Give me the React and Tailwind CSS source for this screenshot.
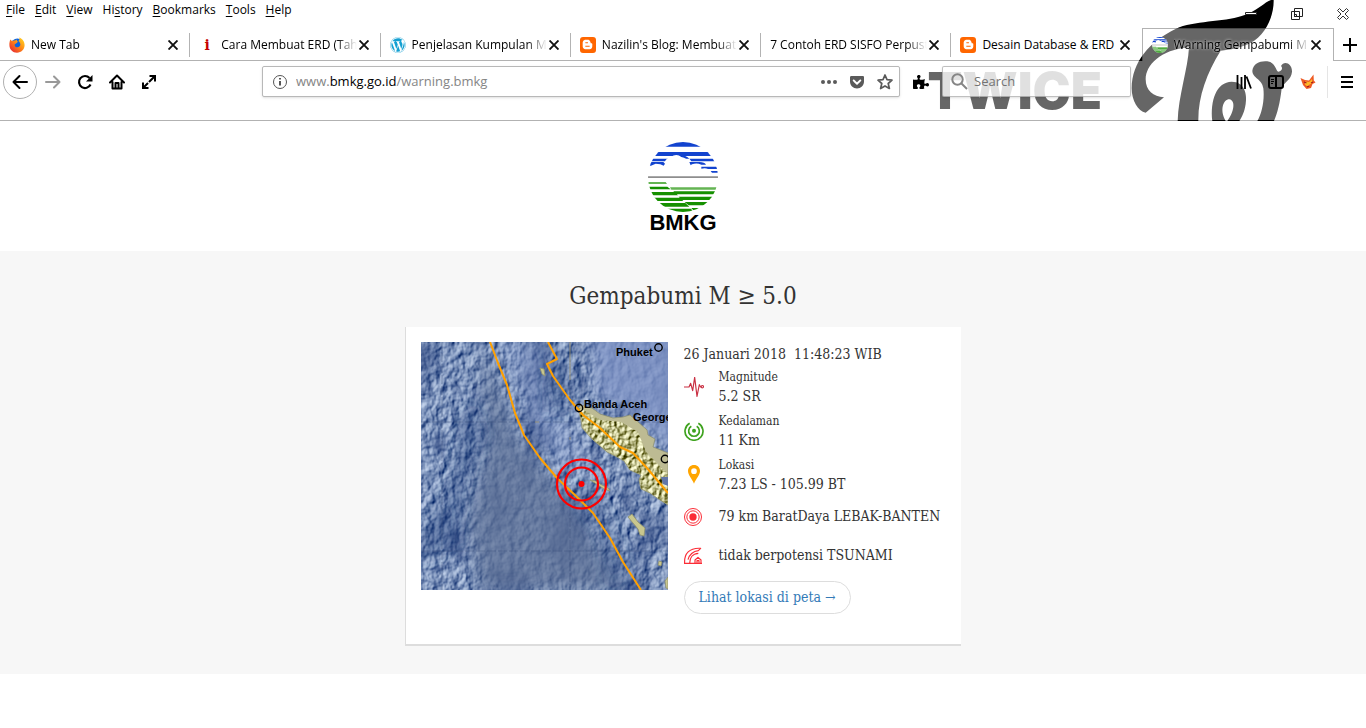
import React from "react";
import { FaWordpress, FaBloggerB, FaGetPocket, FaPuzzlePiece } from "react-icons/fa";

const MENU = [
  ["", "F", "ile"],
  ["", "E", "dit"],
  ["", "V", "iew"],
  ["Hi", "s", "tory"],
  ["", "B", "ookmarks"],
  ["", "T", "ools"],
  ["", "H", "elp"],
];

function FirefoxIcon() {
  return (
    <svg viewBox="0 0 16 16" className="size-4 shrink-0" aria-hidden="true">
      <defs>
        <linearGradient id="fx" x1="1" y1="0" x2="0" y2="1">
          <stop offset="0" stopColor="#ffe226" />
          <stop offset=".45" stopColor="#ff8a16" />
          <stop offset="1" stopColor="#e31537" />
        </linearGradient>
      </defs>
      <circle cx="8.3" cy="7.6" r="6" fill="#0a64df" />
      <path d="M1.3 2.6 3 4c1-.6 2-.7 3-.4L8 2.5c-.3.7 0 1.6 1 2.2L7.4 6.2 5.6 7.4c0 2 1.300 3 3 2.900 1.700-.1 2.800-1.400 2.700-3-.1-1.500-1-2.600-2-3.300 1-.4 1.600-2 .8-3.400C13.500 1.700 15.700 4.700 15.600 8.300 15.500 12.500 12.200 15.700 8 15.700S.5 12.400.4 8.200C.3 6.200.7 4.300 1.300 2.600Z" fill="url(#fx)" />
    </svg>
  );
}

function Stripes({ className }) {
  return (
    <svg viewBox="0 0 210 210" className={className} aria-hidden="true">
      <defs>
        <clipPath id="globe"><circle cx="105" cy="105" r="105" /></clipPath>
      </defs>
      <g clipPath="url(#globe)">
        <rect width="210" height="210" fill="#fff" />
        <path fill="#1243cf" d="M0 0h210v14H0zM0 30h210v12H0zM0 58h52q15-2 30-15h10q25-8 38 15h80v-8H0zM0 60h46l5 5-4 6q-8-6-24-6l-14 6H0zM124 60h30q16 0 20 8h-14q-14-6-28-1l-4 3zM160 74h50v7h-30q-8-4-20-1zM188 87h22v5h-18z" />
        <path fill="#fff" d="M50 62q2-12 18-17 18-12 32 0 18 3 22 18l-18 10H60z" />
        <path fill="#8e8e8e" d="M0 103h210v5H0z" />
        <path fill="#64b453" d="M0 120h53l4 6H0zM66 136h144v7H70z" />
        <path fill="#159000" d="M0 134h58l10 8H0zM76 148h134v9H84zM0 150h78l12 10H10zM92 164h118v10H103zM12 167h84l10 10H24zM110 180h90v10h-78zM30 183h82l12 11H45zM55 200h74l7 10H66zM130 198h50v7h-44z" />
      </g>
    </svg>
  );
}

function BloggerIcon() {
  return (
    <span className="grid size-4 shrink-0 place-items-center rounded-[3px] bg-[#ff6600]">
      <FaBloggerB className="size-[11px] text-white" />
    </span>
  );
}

const TABS = [
  { title: "New Tab", icon: <FirefoxIcon /> },
  { title: "Cara Membuat ERD (Tah", icon: <span className="w-4 shrink-0 text-center font-['DejaVu_Serif',serif] text-sm font-bold text-[#c40000]">i</span> },
  { title: "Penjelasan Kumpulan Ma", icon: <FaWordpress className="size-4 shrink-0 text-[#14a0d2]" /> },
  { title: "Nazilin's Blog: Membuat", icon: <BloggerIcon /> },
  { title: "7 Contoh ERD SISFO Perpusta" },
  { title: "Desain Database & ERD", icon: <BloggerIcon />, whole: true },
  { title: "Warning Gempabumi M", icon: <Stripes className="size-4 shrink-0" />, active: true },
];

function Tab({ tab, last }) {
  const box = tab.active
    ? "border-x border-t border-black/30 bg-white/40 h-[33px]"
    : "border-b border-black/30 h-8";
  const fade = tab.whole ? "" : " [mask-image:linear-gradient(to_right,#000_calc(100%-20px),transparent)]";
  return (
    <li className={"flex min-w-0 flex-1 items-center " + box}>
      <button className="flex min-w-0 flex-1 items-center gap-[6px] pl-[9px] text-left">
        {tab.icon}
        <span className={"min-w-0 flex-1 overflow-hidden whitespace-nowrap" + fade + (tab.active ? " [text-shadow:0_0_3px_#fff]" : "")}>
          {tab.title}
        </span>
      </button>
      <button aria-label={"Close " + tab.title} className="grid w-[14px] shrink-0 place-items-center">
        <svg viewBox="0 0 10 10" className="size-[10px]" stroke="#111" strokeWidth="1.9"><path d="M.5.5l9 9M9.500.5l-9 9" /></svg>
      </button>
      <span className={"ml-[9px] h-6 w-px shrink-0 " + (tab.active || last ? "bg-transparent" : "bg-[#b3b3b3]")} />
    </li>
  );
}

function Theme() {
  return (
    <div aria-hidden="true" className="pointer-events-none absolute inset-0 overflow-hidden">
      <div className="absolute top-[63px] right-[264px] font-['Inter',sans-serif] text-[51px] leading-[56px] font-black">TWICE</div>
      <svg viewBox="0 0 918 363" className="absolute top-0 right-0 h-[121px] w-[306px]">
        <path d="M641 0C642 45 620 103 570 130C540 145 510 149 482 152C440 220 414 290 415 363H353C355 290 384 205 387 142C300 150 258 195 257 238C257 272 280 290 312 292L257 338C234 334 215 302 215 265C216 185 268 125 348 86C400 62 490 66 545 48C590 35 615 5 633 0Z" />
        <path fillRule="evenodd" d="M457 363C450 300 470 246 515 245C555 245 562 285 557 312C553 338 546 350 538 363ZM497 363C478 330 490 298 508 298C528 302 522 336 502 363Z" />
        <path d="M577 212C580 188 606 180 628 185C646 190 648 212 655 215C664 215 670 205 663 198C672 180 697 190 696 215C694 240 672 246 665 265C660 310 652 340 642 363H592C606 340 614 300 610 265C606 235 577 235 577 212Z" />
      </svg>
    </div>
  );
}

function ToolButton({ label, className, children }) {
  return <button aria-label={label} className={"grid size-8 shrink-0 place-items-center " + (className || "")}>{children}</button>;
}

function BrowserChrome() {
  return (
    <header className="relative font-['Open_Sans','Noto_Sans',sans-serif] text-xs text-black">
      <Theme />
      <div className="relative">
        <div className="flex h-7 items-start justify-between">
          <nav className="flex h-5 items-center gap-[10px] pl-[6px]">
            {MENU.map(([a, b, c]) => (
              <button key={b + c} className="leading-5">{a}<u className="underline-offset-2">{b}</u>{c}</button>
            ))}
          </nav>
          <div className="flex">
            <button aria-label="Minimize" className="grid h-7 w-[46px] place-items-center">
              <svg viewBox="0 0 12 12" className="size-3"><path d="M.5 4.500h11v2H.5z" fill="#fff" stroke="#222" /></svg>
            </button>
            <button aria-label="Restore" className="grid h-7 w-[46px] place-items-center">
              <svg viewBox="0 0 12 12" className="size-3" fill="#fff" stroke="#222"><path d="M3.500.5h8v8h-8zM.5 3.500h8v8h-8zM3.500 6.500h2v2h-2z" /></svg>
            </button>
            <button aria-label="Close window" className="grid h-7 w-[46px] place-items-center">
              <svg viewBox="0 0 12 12" className="size-3" fill="#fff" stroke="#333"><path d="M2.500.5 6 4 9.500.5l2 2L8 6l3.500 3.500-2 2L6 8l-3.500 3.500-2-2L4 6 .5 2.500z" /></svg>
            </button>
          </div>
        </div>
        <div className="flex h-[33px] items-end">
          <ul className="flex min-w-0 flex-1 items-end">
            {TABS.map((t, i) => <Tab key={t.title} tab={t} last={i === 5} />)}
          </ul>
          <button aria-label="New tab" className="grid h-8 w-8 place-items-center border-b border-black/30">
            <svg viewBox="0 0 14 14" className="size-[14px]" stroke="#000" strokeWidth="2"><path d="M7 0v14M0 7h14" /></svg>
          </button>
        </div>

        <div className="h-[59px] bg-white/40">
          <div className="flex h-[41px] items-center">
            <button aria-label="Back" className="ml-[3px] grid size-[34px] shrink-0 place-items-center rounded-full border border-[#b0b0b0] bg-white/80">
              <svg viewBox="0 0 16 16" className="size-4" fill="none" stroke="#000" strokeWidth="2" strokeLinecap="round" strokeLinejoin="round"><path d="M15 8H1.500M7.500 2l-6 6 6 6" /></svg>
            </button>
            <ToolButton label="Forward">
              <svg viewBox="0 0 16 16" className="size-4" fill="none" stroke="#999" strokeWidth="2" strokeLinecap="round" strokeLinejoin="round"><path d="M1 8h13.500M9 2.500 14.500 8 9 13.500" /></svg>
            </ToolButton>
            <ToolButton label="Reload">
              <svg viewBox="0 0 16 16" className="size-4" fill="none" stroke="#000" strokeWidth="2.200"><path d="M13.500 10.500A6 6 0 1 1 12.500 4" /><path d="M15.500 1v6.500H9z" fill="#000" stroke="none" /></svg>
            </ToolButton>
            <ToolButton label="Home">
              <svg viewBox="0 0 16 16" className="size-4" fill="none" stroke="#000" strokeWidth="2" strokeLinecap="round" strokeLinejoin="round"><path d="M1 8.500 8 1.500l7 7M3.500 8v6.500h9V8" /><path d="M6.500 14V9h3v5" /></svg>
            </ToolButton>
            <ToolButton label="Full screen">
              <svg viewBox="0 0 16 16" className="size-4" fill="none" stroke="#000" strokeWidth="2"><path d="M3 13 13 3M8.500 2H14v5.500M2 8.500V14h5.500" /><path d="m6.500 7.500 2 2" stroke="#fff" strokeWidth="1.500" /></svg>
            </ToolButton>
            <div className="ml-[97px] flex h-[31px] min-w-0 flex-1 items-center rounded-[2px] border border-[#b8b8b8] bg-white pl-[9px] text-[13px] shadow-sm">
              <svg viewBox="0 0 16 16" className="size-4 shrink-0" fill="none" stroke="#555"><circle cx="8" cy="8" r="6.500" /><path d="M8 7v4.500M8 4v1.500" strokeWidth="2" /></svg>
              <div className="ml-2 min-w-0 flex-1 truncate text-[#858585]">www.<span className="text-black">bmkg.go.id</span>/warning.bmkg</div>
              <button aria-label="Page actions" className="grid w-7 shrink-0 place-items-center">
                <svg viewBox="0 0 16 16" className="size-4" fill="#5a5a5a"><circle cx="2" cy="8" r="2" /><circle cx="8" cy="8" r="2" /><circle cx="14" cy="8" r="2" /></svg>
              </button>
              <button aria-label="Save to Pocket" className="grid w-7 shrink-0 place-items-center"><FaGetPocket className="size-4 text-[#5a5a5a]" /></button>
              <button aria-label="Bookmark" className="grid w-7 shrink-0 place-items-center">
                <svg viewBox="0 0 16 16" className="size-4" fill="none" stroke="#5a5a5a" strokeWidth="1.700" strokeLinejoin="round"><path d="m8 1 2 4.700 5 .5-3.800 3.300 1.200 5L8 11.900 3.600 14.500l1.200-5L1 6.200l5-.5z" /></svg>
              </button>
            </div>
            <button aria-label="Extension" className="ml-[13px] grid shrink-0 place-items-center"><FaPuzzlePiece className="size-4" /></button>
            <label className="ml-[13px] flex h-[31px] w-[189px] shrink-0 items-center gap-[6px] rounded-[2px] border border-black/25 bg-white/80 pl-2 shadow-sm">
              <svg viewBox="0 0 17 17" className="size-[17px] shrink-0" fill="none" stroke="#858585" strokeWidth="2"><circle cx="6.500" cy="6.500" r="5.200" /><path d="m10.500 10.500 5.500 5.500" /></svg>
              <input aria-label="Search" placeholder="Search" className="min-w-0 flex-1 bg-transparent text-[13px] outline-none placeholder:text-[#737373]" />
            </label>
            <ToolButton label="Library" className="ml-[97px]">
              <svg viewBox="0 0 16 16" className="size-4" stroke="#000" strokeWidth="2"><path d="M1.500 1v14M5.500 3v12M9 1v14M10.500 2.500 15 14.500" strokeWidth="1.800" /></svg>
            </ToolButton>
            <ToolButton label="Sidebar">
              <svg viewBox="0 0 16 16" className="size-4" fill="none" stroke="#000" strokeWidth="2"><rect x="1" y="2" width="14" height="12" rx="2" /><path d="M8 2v12" /><path d="M3 5.500h3M3 7.500h3M3 9.500h2" strokeWidth="1" /></svg>
            </ToolButton>
            <ToolButton label="Fox">
              <svg viewBox="0 0 16 16" className="size-4"><path d="m.5 4 4.500 2 4 .5L13.500.5l.3 6 1.700 2-3 1.500L11 14l-4.500 1L3 11z" fill="#ee5a24" /><path d="m5 7.500 4 .5 3-3 .5 4-3 1.500L8 13l-3-2.500z" fill="#fdb827" /><path d="m4 8 2.500 1M11 9l2-1M7 13l2-1" stroke="#a3151c" strokeWidth="1.300" /></svg>
            </ToolButton>
            <span className="ml-[3px] h-8 w-px shrink-0 bg-black/10" />
            <ToolButton label="Menu" className="mr-[3px] ml-[3px]">
              <svg viewBox="0 0 12 14" className="h-[14px] w-3" stroke="#000" strokeWidth="2"><path d="M0 2h12M0 7h12M0 12h12" /></svg>
            </ToolButton>
          </div>
        </div>
        <div className="h-px bg-black/30" />
      </div>
    </header>
  );
}

const LAND = "M157 66 160 63 166 65 171 66 179 72 192 76 202 75 209 73 216 79 226 88 227 93 234 97 232 105 247 111V163L239 158 229 151 220 147 218 138 220 133 209 128 203 119 196 115 186 110 172 98 161 86 160 78Z";
const ISLANDS = "M119 26 123 27 124 34 121 32ZM169 138 175 139 179 142 187 146 189 149 183 147 177 143ZM207 175 211 172 217 180 224 186 223 194 219 193 217 187ZM238 219 241 220 240 224 237 223ZM247 235 244 239 245 246 247 247Z";

function QuakeMap() {
  return (
    <svg viewBox="0 0 247 248" role="img" aria-label="Peta lokasi gempabumi" className="block w-full max-w-[247px]">
      <defs>
        <filter id="relief" x="0" y="0" width="100%" height="100%" colorInterpolationFilters="sRGB">
          <feTurbulence type="fractalNoise" baseFrequency=".12 .09" numOctaves="3" seed="8" result="n" />
          <feColorMatrix in="n" values="0 0 0 0 0  0 0 0 0 0  0 0 0 0 0  1 0 0 0 0" result="h" />
          <feDiffuseLighting in="h" surfaceScale="2" lightingColor="#fff" result="l"><feDistantLight azimuth="215" elevation="48" /></feDiffuseLighting>
          <feComponentTransfer in="l"><feFuncR type="linear" slope="1.150" intercept="-.36" /><feFuncG type="linear" slope="1.050" intercept="-.2" /><feFuncB type="linear" slope=".8" intercept=".14" /></feComponentTransfer>
        </filter>
        <filter id="shade" x="0" y="0" width="100%" height="100%" colorInterpolationFilters="sRGB">
          <feTurbulence type="fractalNoise" baseFrequency=".03 .018" numOctaves="4" seed="4" />
          <feColorMatrix values="0 0 0 0 .1  0 0 0 0 .2  0 0 0 0 .44  4 0 0 0 -2" />
        </filter>
        <filter id="hills" x="0" y="0" width="100%" height="100%" colorInterpolationFilters="sRGB">
          <feTurbulence type="fractalNoise" baseFrequency=".2" numOctaves="3" seed="12" />
          <feColorMatrix values="0 0 0 0 0  0 0 0 0 0  0 0 0 0 0  1 0 0 0 0" />
          <feDiffuseLighting surfaceScale="2.200" lightingColor="#fffff0" result="l"><feDistantLight azimuth="215" elevation="52" /></feDiffuseLighting>
          <feComponentTransfer><feFuncR type="linear" slope="1.200" intercept="-.18" /><feFuncG type="linear" slope="1.200" intercept="-.18" /><feFuncB type="linear" slope="1.500" intercept="-.54" /></feComponentTransfer>
        </filter>
        <filter id="soft" x="-30%" y="-30%" width="160%" height="160%"><feGaussianBlur stdDeviation="8" /></filter>
        <clipPath id="frame"><path d="M0 0h247v248H0z" /></clipPath>
        <clipPath id="landclip"><path d={LAND} /></clipPath>
        <clipPath id="ridge"><path d="M155 64 180 78 200 80 217 90 225 110 247 132V165H228L205 125 165 92Z" /></clipPath>
      </defs>
      <g clipPath="url(#frame)">
        <rect width="247" height="248" fill="#6f86b9" />
        <rect width="247" height="248" filter="url(#relief)" />
        <rect width="247" height="248" filter="url(#shade)" opacity=".45" />
        <path d="M60 0 98 95 152 160 205 248H60L45 180 65 100Z" fill="#5f7297" opacity=".75" filter="url(#soft)" />
        <path d="M170-10H260V115L205 70 175 55Z" fill="#8094c6" opacity=".8" filter="url(#soft)" />
        <path d="M80 0h40l5 60 25 25 20 35-30 5-30-45z" fill="#8fa3d0" opacity=".45" filter="url(#soft)" />
        <path d="M50 60 62 90 42 150 35 200 0 220V195L28 150ZM130 0 148 25 145 70 128 70ZM146 145 175 150 205 225 190 248 180 190Z" fill="#1f3b76" opacity=".5" filter="url(#soft)" />
        <path d="M21 0V248M149 0V248M0 80H247M0 209H247" stroke="#384d78" strokeWidth="1" opacity=".4" strokeDasharray="9 2" />
        <path d="M149 0V38M149 95v3M114 80h4" stroke="#b8a979" opacity=".7" />
        <path d={LAND} fill="#bdbb93" />
        <g clipPath="url(#landclip)">
          <g clipPath="url(#ridge)">
            <rect width="247" height="248" filter="url(#hills)" />
          </g>
        </g>
        <path d={LAND} fill="none" stroke="#8f9274" strokeWidth=".8" />
        <path d="M240 135h7v9l-5-2z" fill="#6176a8" />
        <path d={ISLANDS} fill="#c9c78e" stroke="#8f9270" strokeWidth=".8" />
        <g fill="none" stroke="#ffa000" strokeWidth="2" strokeLinejoin="round">
          <path d="M69 0 77 21 86 43 94 71 103 93 119 116 136 136 156 155 172 171 189 196 202 220 220 248" />
          <path d="M127 0 136 17 126 22 132 34 149 58 162 73 179 86 199 105 212 111 226 126 247 151" />
        </g>
        <g fill="none" stroke="#000" strokeWidth="1.400"><circle cx="237.500" cy="5.500" r="3.700" /><circle cx="158" cy="66" r="3.700" /><circle cx="244" cy="117" r="3.700" /></g>
        <g fill="#000" fontFamily="Liberation Sans, Arial, sans-serif" fontWeight="700" fontSize="11">
          <text x="195" y="14">Phuket</text>
          <text x="163" y="66">Banda Aceh</text>
          <text x="212" y="79">George</text>
        </g>
        <g fill="none" stroke="#f00" strokeWidth="2.200"><circle cx="160.500" cy="142" r="24.500" /><circle cx="160.500" cy="142" r="16.500" /></g>
        <circle cx="160.500" cy="142" r="3" fill="#f00" />
      </g>
    </svg>
  );
}

const ICONS = {
  wave: <svg viewBox="0 0 60 60" className="size-5" fill="none" stroke="#c92f42" strokeWidth="3.500" strokeLinejoin="round"><path d="M0 30h15l5-11 6 22 6-40 7 57 7-35 4 7h3" /><circle cx="55" cy="29" r="3.500" /></svg>,
  depth: <svg viewBox="0 0 60 60" className="size-5" fill="none" stroke="#3fa31f" strokeWidth="5"><path d="M17 7A27 27 0 1 0 43 7" /><path d="M22 16A16 16 0 1 0 38 16" /><circle cx="30" cy="29" r="6" fill="#3fa31f" stroke="none" /></svg>,
  pin: <svg viewBox="0 0 60 60" className="size-5"><path fillRule="evenodd" fill="#ffa500" d="M30 0C19 0 12 8 12 18c0 13 12 23 18 38 6-15 18-25 18-38C48 8 41 0 30 0Zm0 10a8.500 8.500 0 1 1 0 17 8.500 8.500 0 0 1 0-17Z" /></svg>,
  epicenter: <svg viewBox="0 0 54 54" className="size-[18px]" fill="none" stroke="#fb2c36" strokeWidth="3"><circle cx="27" cy="27" r="25.500" /><circle cx="27" cy="27" r="18.500" /><circle cx="27" cy="27" r="11" fill="#fb2c36" stroke="none" /></svg>,
  tsunami: <svg viewBox="0 0 54 54" className="size-[18px]" fill="none" stroke="#fb2c36" strokeWidth="3.500" strokeLinejoin="round"><path d="M0 49h54M2 49C0 20 16 2 50 4L43 11C28 12 15 24 12 38M17 49C17 33 26 20 43 19M33 49V39l9-8 9 8v10M39 49v-8h6v8" /></svg>,
};

function Item({ icon, label, value }) {
  return (
    <li className={"flex items-center " + (label ? "h-11" : "h-[39px]")}>
      <span className="w-[35px] shrink-0">{ICONS[icon]}</span>
      <div className="whitespace-nowrap">
        {label && <p className="text-xs leading-[19px]">{label}</p>}
        <p className="text-sm leading-[19px]">{value}</p>
      </div>
    </li>
  );
}

export default function App() {
  return (
    <div className="bg-white">
      <BrowserChrome />
      <div className="flex flex-col items-center pt-[21px] pb-[18px]">
        <Stripes className="size-[70px]" />
        <span className="font-['Liberation_Sans',Arial,sans-serif] text-[22px] leading-[21px] font-bold text-black">BMKG</span>
      </div>
      <main className="bg-[#f7f7f7] pt-7 pb-7 font-['Roboto_Slab','DejaVu_Serif_Condensed','DejaVu_Serif',serif] text-[#333]">
        <h1 className="text-center text-2xl leading-[34px]">Gempabumi M ≥ 5.0</h1>
        <section className="mx-auto mt-[14px] grid w-full max-w-[556px] grid-cols-2 border-b-2 border-l border-[#ddd] bg-white pb-[15px]">
          <div className="p-[15px]"><QuakeMap /></div>
          <div className="py-[15px]">
            <p className="pt-[2px] text-sm leading-5 whitespace-pre">26 Januari 2018  11:48:23 WIB</p>
            <ul className="pt-px">
              <Item icon="wave" label="Magnitude" value="5.2 SR" />
              <Item icon="depth" label="Kedalaman" value="11 Km" />
              <Item icon="pin" label="Lokasi" value="7.23 LS - 105.99 BT" />
              <Item icon="epicenter" value="79 km BaratDaya LEBAK-BANTEN" />
              <Item icon="tsunami" value="tidak berpotensi TSUNAMI" />
            </ul>
            <a href="#peta" className="mt-[6px] inline-block rounded-full border border-[#ddd] px-[14px] text-sm leading-[31px] text-[#337ab7]">Lihat lokasi di peta →</a>
          </div>
        </section>
      </main>
    </div>
  );
}
